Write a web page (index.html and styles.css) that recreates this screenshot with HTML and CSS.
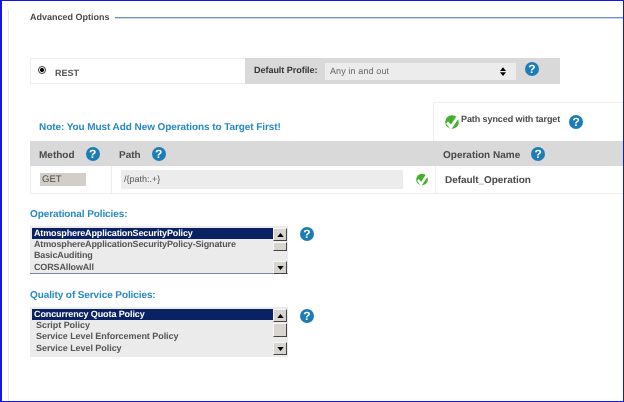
FILE: index.html
```html
<!DOCTYPE html>
<html lang="en">
<head>
<meta charset="UTF-8">
<meta name="viewport" content="width=device-width, initial-scale=1.0">
<title>Advanced Options</title>
<link rel="stylesheet" href="styles.css">
</head>
<body>
<svg width="0" height="0" class="defs">
  <symbol id="check" viewBox="0 0 14 14">
    <circle cx="7" cy="7" r="6.8" fill="#43b02a"/>
    <path d="M3 6.4 6 9.6 11.4 1.6 13.6 3.4 6.8 13.8 5 13.8 1.2 8.4Z" fill="#fff"/>
  </symbol>
  <symbol id="up" viewBox="0 0 8 5"><path d="M4 0 8 5H0Z" fill="#000"/></symbol>
  <symbol id="down" viewBox="0 0 8 5"><path d="M0 0H8L4 5Z" fill="#000"/></symbol>
</svg>
<div class="frame">
  <div class="panel">
    <div class="legend"><span>Advanced Options</span><i></i></div>

    <div class="type-row">
      <div class="type-left">
        <span class="radio"></span>
        <span class="type-name">REST</span>
      </div>
      <div class="type-right">
        <b class="profile-label">Default Profile:</b>
        <div class="fake-select">
          <span>Any in and out</span>
          <span class="updown">
            <svg width="6" height="4"><use href="#up"/></svg>
            <svg width="6" height="4"><use href="#down"/></svg>
          </span>
        </div>
        <span class="help">?</span>
      </div>
    </div>

    <div class="note-row">
      <div class="note">Note: You Must Add New Operations to Target First!</div>
      <div class="sync">
        <svg class="ok" width="14" height="14"><use href="#check"/></svg>
        <span>Path synced with target</span>
        <span class="help">?</span>
      </div>
    </div>

    <div class="ops-head">
      <div class="col-method"><b>Method</b><span class="help">?</span></div>
      <div class="col-path"><b>Path</b><span class="help">?</span></div>
      <div class="col-name"><b>Operation Name</b><span class="help">?</span></div>
    </div>
    <div class="ops-row">
      <div class="col-method"><span class="get">GET</span></div>
      <div class="col-path">
        <span class="path-input">/{path:.+}</span>
        <svg width="12" height="13"><use href="#check"/></svg>
      </div>
      <div class="col-name"><b>Default_Operation</b></div>
    </div>

    <h3 class="policy-title first">Operational Policies:</h3>
    <div class="policy-row">
      <div class="listbox lined">
        <div class="items tight">
          <div class="sel">AtmosphereApplicationSecurityPolicy</div>
          <div>AtmosphereApplicationSecurityPolicy-Signature</div>
          <div>BasicAuditing</div>
          <div>CORSAllowAll</div>
        </div>
        <div class="scroll">
          <span class="arrow"><svg width="7" height="4"><use href="#up"/></svg></span>
          <span class="thumb short"></span>
          <span class="track"></span>
          <span class="arrow"><svg width="7" height="4"><use href="#down"/></svg></span>
        </div>
      </div>
      <span class="help">?</span>
    </div>

    <h3 class="policy-title">Quality of Service Policies:</h3>
    <div class="policy-row low">
      <div class="listbox tall">
        <div class="items indented">
          <div class="sel">Concurrency Quota Policy</div>
          <div>Script Policy</div>
          <div>Service Level Enforcement Policy</div>
          <div>Service Level Policy</div>
        </div>
        <div class="scroll">
          <span class="arrow"><svg width="7" height="4"><use href="#up"/></svg></span>
          <span class="thumb"></span>
          <span class="track"></span>
          <span class="arrow"><svg width="7" height="4"><use href="#down"/></svg></span>
        </div>
      </div>
      <span class="help">?</span>
    </div>
  </div>
</div>
</body>
</html>
```

FILE: styles.css
```css
html, body {
    margin: 0;
    padding: 0;
}
body {
    font-family: "Liberation Sans", Arial, sans-serif;
    color: #4a4a4a;
    background-color: #fff;
    text-rendering: geometricPrecision;
}
.defs {
    display: block;
    height: 0;
}
.frame {
    width: 624px;
    height: 402px;
    box-sizing: border-box;
    border: 1px solid #1414f0;
    border-left-width: 2px;
    overflow: hidden;
}
.panel {
    height: 100%;
    margin-left: 6px;
    padding-left: 21px;
    border-left: 1px solid #e6e6e6;
    box-sizing: border-box;
    filter: blur(0.25px);
}
.help {
    display: inline-block;
    flex: none;
    width: 14px;
    height: 14px;
    border-radius: 50%;
    background-color: #1c7db6;
    color: #fff;
    font-size: 12px;
    font-weight: bold;
    line-height: 14px;
    text-align: center;
}
.legend {
    display: flex;
    align-items: center;
    height: 14px;
    margin-top: 9px;
    font-size: 9px;
    font-weight: bold;
}
.legend i {
    flex: 1;
    height: 1px;
    margin-left: 5px;
    background-color: #6e94c8;
    box-shadow: 0 1px 0 #c8d7ea;
}
.type-row {
    display: flex;
    height: 26px;
    margin-top: 34px;
}
.type-left {
    display: flex;
    align-items: center;
    width: 215px;
    box-sizing: border-box;
    border: 1px solid #eee;
    border-right: 0;
    padding-left: 7px;
}
.radio {
    width: 6px;
    height: 6px;
    margin-bottom: 2px;
    border: 1px solid #333;
    border-radius: 50%;
    background: radial-gradient(circle, #000 40%, #fff 55%);
}
.type-name {
    margin: 4px 0 0 9px;
    font-size: 9px;
    font-weight: bold;
    color: #555;
}
.type-right {
    display: flex;
    align-items: center;
    width: 315px;
    padding-left: 9px;
    box-sizing: border-box;
    background-color: #d9d9d9;
    font-size: 9px;
    color: #333;
}
.profile-label {
    width: 71px;
    margin-bottom: 2px;
    letter-spacing: -0.03px;
}
.fake-select {
    display: flex;
    align-items: center;
    justify-content: space-between;
    width: 191px;
    height: 17px;
    padding: 0 10px 0 5px;
    box-sizing: border-box;
    background-color: #ececec;
    color: #666;
    letter-spacing: 0.12px;
}
.updown {
    display: flex;
    flex-direction: column;
    gap: 1px;
}
.updown svg {
    display: block;
}
.type-right .help {
    margin: 0 0 5px 9px;
}
.note-row {
    display: flex;
    justify-content: space-between;
    height: 39px;
    margin-top: 18px;
}
.note {
    align-self: flex-end;
    margin: 0 0 8px 9px;
    color: #2a8ac6;
    font-size: 10px;
    font-weight: bold;
    letter-spacing: -0.08px;
}
.sync {
    display: flex;
    align-items: flex-start;
    width: 190px;
    box-sizing: border-box;
    padding: 11px 0 0 11px;
    border-left: 1px solid #eee;
    border-top: 1px solid #eee;
    font-size: 9px;
    font-weight: bold;
    letter-spacing: -0.08px;
}
.sync .ok {
    margin: 1px 2px 0 0;
}
.sync .help {
    margin: 1px 0 0 9px;
}
.ops-head, .ops-row {
    display: flex;
}
.ops-head {
    height: 25px;
    align-items: center;
    background-color: #d9d9d9;
    font-size: 10px;
}
.ops-head b {
    padding-top: 4px;
}
.ops-head .help {
    margin-left: 11px;
}
.ops-head .col-method, .ops-head .col-path, .ops-head .col-name {
    display: flex;
    align-items: center;
}
.ops-head .col-name {
    padding-left: 7px;
}
.ops-head .col-name .help {
    margin-left: 11px;
}
.col-method {
    width: 81px;
    padding-left: 9px;
    box-sizing: border-box;
}
.col-path {
    width: 325px;
    padding-left: 8px;
    box-sizing: border-box;
}
.col-name {
    flex: 1;
    padding-left: 9px;
}
.ops-row {
    height: 28px;
    border-bottom: 1px solid #eee;
    border-left: 1px solid #eee;
    box-sizing: border-box;
    align-items: stretch;
    font-size: 10px;
}
.ops-row .col-method, .ops-row .col-path, .ops-row .col-name {
    display: flex;
    align-items: center;
}
.ops-row .col-path {
    width: 325px;
    padding-left: 9px;
    border-left: 1px solid #eee;
    border-right: 1px solid #eee;
}
.ops-row .col-method {
    width: 80px;
}
.ops-row .col-name {
    padding: 2px 0 0 9px;
    letter-spacing: -0.05px;
}
.get {
    width: 46px;
    height: 13px;
    padding-left: 2px;
    box-sizing: border-box;
    background-color: #d2cec8;
    font-size: 9.5px;
    line-height: 14px;
}
.path-input {
    width: 282px;
    height: 19px;
    padding-left: 3px;
    box-sizing: border-box;
    background-color: #ececec;
    line-height: 19px;
    margin-right: 13px;
    color: #555;
    font-size: 9px;
}
.policy-title {
    margin: 16px 0 5px;
    height: 12px;
    color: #2a8ac6;
    font-size: 10px;
    line-height: 12px;
    letter-spacing: -0.1px;
}
.policy-title.first {
    margin-top: 15px;
}
.policy-row {
    display: flex;
    align-items: flex-start;
}
.policy-row .help {
    margin: 1px 0 0 12px;
}
.policy-row.low .help {
    margin-top: 2px;
}
.listbox {
    display: flex;
    width: 258px;
    height: 48px;
    padding: 2px 1px 0 2px;
    box-sizing: border-box;
    background-color: #ebebeb;
    font-size: 9px;
    font-weight: bold;
    color: #555;
}
.listbox.tall {
    height: 50px;
    padding-bottom: 2px;
}
.listbox.lined {
    box-shadow: inset 0 -1px 0 #7c86aa;
}
.items {
    flex: 1;
    line-height: 11.2px;
}
.items div {
    height: 11.2px;
    padding-left: 2px;
}
.items.tight {
    letter-spacing: -0.14px;
}
.items.indented {
    letter-spacing: -0.05px;
}
.items.indented div {
    padding-left: 4px;
}
.items .sel {
    background-color: #0a2163;
    color: #fff;
}
.items.indented .sel {
    padding-left: 2px;
    letter-spacing: -0.1px;
}
.scroll {
    display: flex;
    flex-direction: column;
    width: 14px;
}
.arrow, .thumb {
    box-sizing: border-box;
    background-color: #d8d4ce;
    border: 1px solid;
    border-color: #f6f6f6 #444 #444 #f6f6f6;
}
.arrow {
    display: flex;
    align-items: center;
    justify-content: center;
    height: 13px;
}
.thumb {
    height: 14px;
    margin-top: 1px;
}
.thumb.short {
    height: 9px;
}
.track {
    flex: 1;
}
```
